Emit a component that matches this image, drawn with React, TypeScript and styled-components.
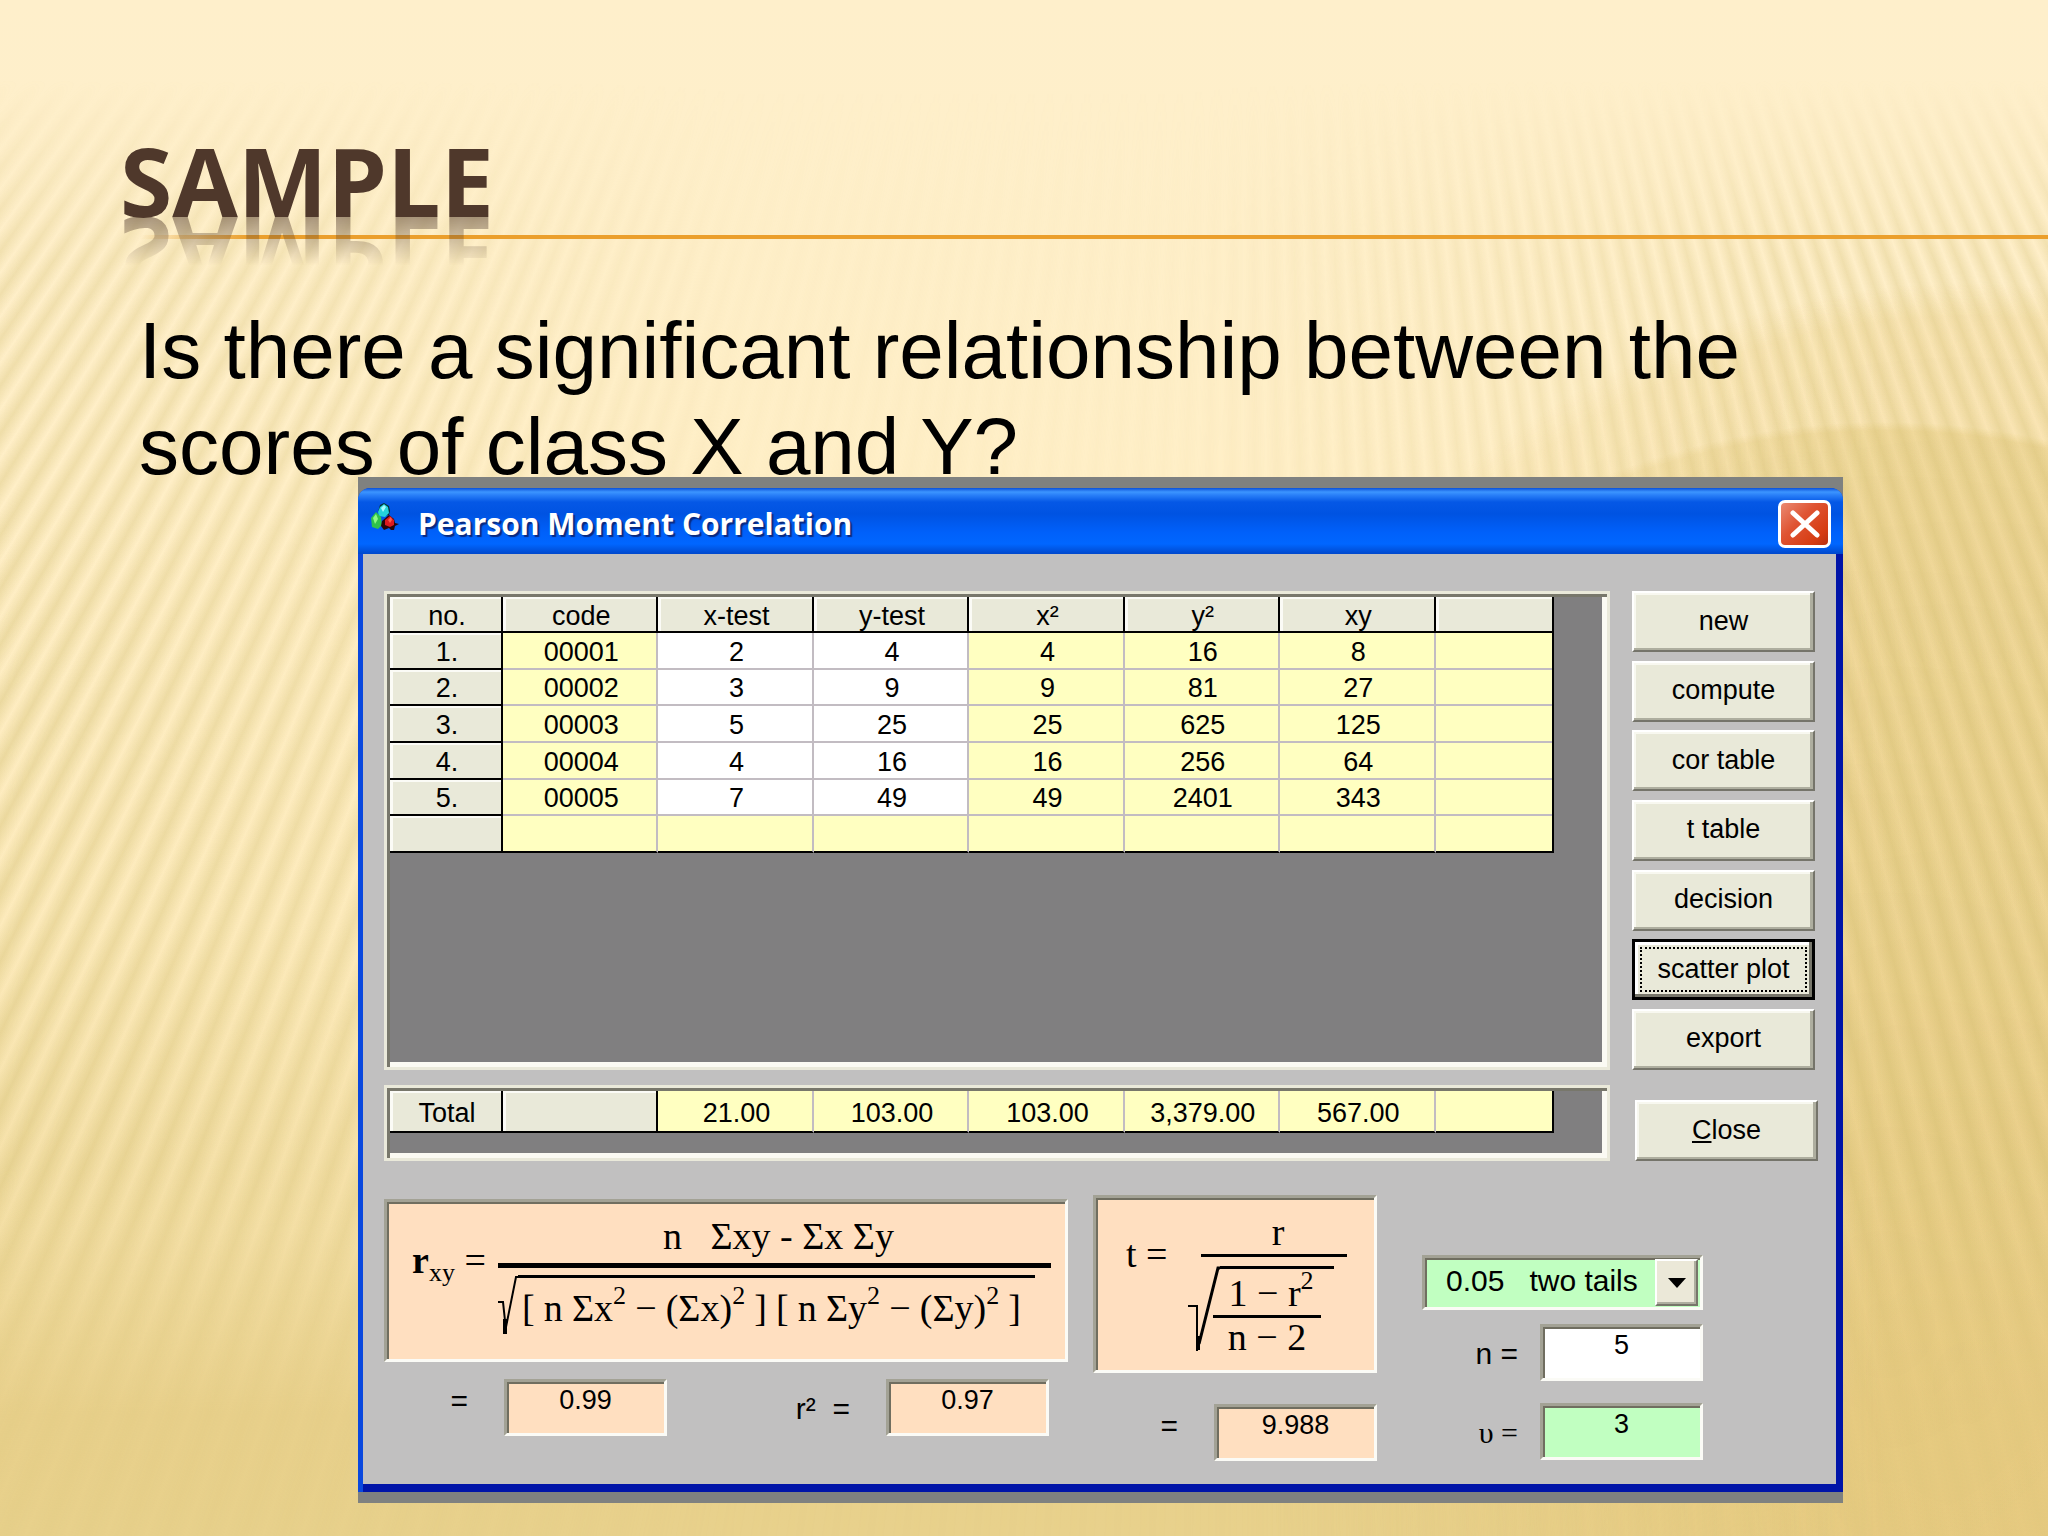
import React from 'react';
import styled, { createGlobalStyle, css } from 'styled-components';

const GlobalStyle = createGlobalStyle`
  *, *::before, *::after { box-sizing: border-box; }
  body { margin: 0; background: #fdeec6; }
`;

const sans = `"Liberation Sans", Arial, sans-serif`;
const serif = `"Liberation Serif", "Times New Roman", serif`;

/* ---------- slide ---------- */

const Slide = styled.main`
  position: relative;
  isolation: isolate;
  min-height: 100vh;
  padding: 132px 0 34px;
  overflow: hidden;
  color: #000;
  font-family: ${sans};
  background: linear-gradient(180deg, #feefcb 0%, #ffefc7 32%, #fdebbc 60%, #f4dfa5 80%, #e8d08b 92%, #e8d18c 100%);

  &::before,
  &::after {
    content: '';
    position: absolute;
    inset: 0;
    z-index: -1;
  }

  &::before {
    background:
      radial-gradient(ellipse 820px 900px at 92% 86%, rgba(224, 194, 116, 0.5) 0%, rgba(226, 198, 120, 0.42) 99%, transparent 100%),
      radial-gradient(ellipse 900px 1100px at 96% 90%, rgba(240, 210, 140, 0.4) 0%, rgba(240, 212, 144, 0.35) 97%, transparent 100%);
    mask-image: linear-gradient(90deg, transparent 62%, #000 92%);
  }

  &::after {
    background: repeating-conic-gradient(
      from 0deg at 61% -1500px,
      rgba(205, 184, 104, 0) 0deg,
      rgba(205, 184, 104, 0.38) 0.33deg,
      rgba(205, 184, 104, 0) 0.66deg
    );
    mask-image:
      linear-gradient(180deg, transparent 80px, rgba(0, 0, 0, 0.75) 260px, #000 700px, #000 76%, rgba(0, 0, 0, 0.2) 92%),
      linear-gradient(90deg, #000 0%, rgba(0, 0, 0, 0.75) 16%, rgba(0, 0, 0, 0.1) 36%, rgba(0, 0, 0, 0.1) 58%, #000 88%);
    mask-composite: intersect;
  }
`;

const Title = styled.h1`
  width: fit-content;
  margin: 0 0 0 120px;
  font: 700 95px/96px "Open Sans", "Noto Sans", sans-serif;
  color: #4f382b;
  text-transform: uppercase;
  -webkit-box-reflect: below -22px linear-gradient(180deg, transparent 38%, rgba(0, 0, 0, 0.5) 90%);
`;

const Rule = styled.hr`
  height: 4px;
  margin: 7px 0 0 140px;
  border: 0;
  background: linear-gradient(90deg, rgba(236, 158, 40, 0) 0, #eb9f2c 110px);
`;

const Question = styled.p`
  margin: 64px 139px 0;
  font-size: 80px;
  line-height: 96px;
`;

/* ---------- window ---------- */

const Backing = styled.section`
  position: relative;
  margin: -18px 205px 0 358px;
  padding: 11px 0;
  background: #7f8180;
`;

const Window = styled.div`
  border-radius: 12px 12px 0 0;
  background: #0a48de;
  overflow: hidden;
`;

const TitleBar = styled.header`
  display: flex;
  align-items: center;
  gap: 18px;
  height: 66px;
  padding: 5px 12px 0;
  background: linear-gradient(180deg, #0a50d8 0, #3c95ff 4px, #2a80f8 7px, #0558e6 14px, #0053e2 26px, #0060fa 44px, #0066ff 56px, #0048cc 66px);
`;

const AppMark = styled.svg`
  align-self: flex-start;
  margin-top: 10px;
`;

const WindowTitle = styled.h2`
  flex: 1;
  margin: 0;
  font: 700 30px/40px "Open Sans", "Noto Sans", sans-serif;
  color: #fff;
  text-shadow: 2px 2px 1px #0a2a80;
`;

const CloseBox = styled.button`
  display: grid;
  place-items: center;
  width: 53px;
  height: 48px;
  padding: 0;
  border: 3px solid #fff;
  border-radius: 7px;
  background: linear-gradient(135deg, #ea8a72 0%, #df5433 40%, #d63c12 80%, #b83010 100%);
`;

const Body = styled.div`
  margin: 0 7px 8px 5px;
  padding: 37px 18px 23px 21px;
  background: #c1c0c0;
  box-shadow: 4px 4px 0 4px #0014a8;
`;

const Upper = styled.div`
  display: grid;
  grid-template-columns: 1fr 186px;
  gap: 15px 22px;
`;

const Panel = styled.div<{ $height: number }>`
  min-height: ${(p) => p.$height}px;
  padding: 3px 5px 5px 3px;
  border: 3px solid #eae9da;
  background: #807f80;
  box-shadow: inset 3px 3px 0 #78776b, inset -5px -5px 0 #fbfaf3;
`;

/* ---------- tables ---------- */

const Grid = styled.table<{ $height: number }>`
  width: 96%;
  height: ${(p) => p.$height}px;
  table-layout: fixed;
  border-collapse: separate;
  border-spacing: 0;
  border-right: 2px solid #000;
  font-size: 27px;
  line-height: 30px;
  text-align: center;
`;

const NumberCol = styled.col`
  width: 113px;
`;

const SpareCol = styled.col`
  width: 116px;
`;

const Head = styled.th`
  height: 36px;
  padding: 3px 0 0 3px;
  border-right: 2px solid #000;
  border-bottom: 2px solid #000;
  background: #e9e9d9;
  box-shadow: inset 3px 2px 0 #fbfbf6;
  font-weight: 400;

  &:last-child { border-right: 0; }
`;

const Cell = styled.td<{ $plain?: boolean }>`
  height: 36px;
  padding: 3px 0 0 3px;
  border-right: 2px solid #c2bcc2;
  border-bottom: 2px solid #c2bcc2;
  background: ${(p) => (p.$plain ? '#fff' : '#ffffc1')};

  &:last-child { border-right: 0; }
  tr:last-child > & { border-bottom-color: #000; }
`;

/* ---------- buttons ---------- */

const Commands = styled.div`
  display: flex;
  flex-direction: column;
  justify-content: space-between;
`;

const CommandButton = styled.button<{ $focused?: boolean; $end?: boolean }>`
  display: grid;
  width: 183px;
  height: 61px;
  padding: 4px;
  border: 2px solid;
  border-color: #fff #75746a #75746a #fff;
  background: #e9e9d9;
  box-shadow: inset -3px -2px 0 #aeae9f, inset 2px 2px 0 #f8f8f0;
  font: 27px/30px ${sans};
  color: #000;

  ${(p) => p.$end && css`
    align-self: end;
    justify-self: end;
  `}

  ${(p) => p.$focused && css`
    border-width: 3px;
    padding: 3px;
    border-color: #000;
    box-shadow: inset -3px -3px 0 #77766a, inset 3px 3px 0 #fff;
  `}
`;

const Face = styled.span<{ $focused?: boolean }>`
  display: grid;
  place-items: center;
  margin: 2px;
  padding-bottom: 2px;
  border: 2px dotted ${(p) => (p.$focused ? '#000' : 'transparent')};
  white-space: nowrap;
`;

/* ---------- lower part ---------- */

const Lower = styled.div`
  display: flex;
  margin-top: 34px;
`;

const Group = styled.div<{ $width: number; $top: number; $gap: number; $after: number }>`
  display: flex;
  flex-direction: column;
  gap: ${(p) => p.$gap}px;
  width: ${(p) => p.$width}px;
  margin-right: ${(p) => p.$after}px;
  padding-top: ${(p) => p.$top}px;
`;

const Stack = styled.div`
  display: flex;
  flex-direction: column;
  gap: 22px;
`;

const sunken = css`
  border: 3px solid;
  border-color: #a3a295 #fbfbf6 #fbfbf6 #a3a295;
  box-shadow: inset 2px 2px 0 #706e60;
`;

const FormulaBox = styled.div<{ $height: number; $indent: number }>`
  ${sunken}
  display: flex;
  align-items: flex-start;
  min-height: ${(p) => p.$height}px;
  padding: 12px 14px 0 ${(p) => p.$indent}px;
  background: #ffdfc0;
  font: 38px/44px ${serif};
  white-space: pre;

  sup, sub { font-size: 26px; line-height: 0; }
  sup { vertical-align: 17px; }
  sub { vertical-align: -8px; font-weight: 400; }
`;

const Lhs = styled.span<{ $width: number; $top: number }>`
  flex: none;
  width: ${(p) => p.$width}px;
  padding-top: ${(p) => p.$top}px;
`;

const Fraction = styled.div<{ $width?: number }>`
  display: flex;
  flex-direction: column;
  flex: ${(p) => (p.$width ? 'none' : '1')};
  width: ${(p) => (p.$width ? `${p.$width}px` : 'auto')};
`;

const Numerator = styled.div<{ $bar: number; $space?: number }>`
  padding: 0 0 ${(p) => p.$space ?? 0}px 8px;
  border-bottom: ${(p) => p.$bar}px solid #000;
  text-align: center;
`;

const Root = styled.div<{ $top: number; $left?: number; $right: number }>`
  display: flex;
  margin: ${(p) => p.$top}px ${(p) => p.$right}px 0 ${(p) => p.$left ?? 0}px;
`;

const Radicand = styled.div<{ $pad: string }>`
  flex: 1;
  padding: ${(p) => p.$pad};
  border-top: 3px solid #000;
`;

const Product = styled.div`
  display: flex;
  justify-content: space-between;
`;

const InnerFraction = styled.div`
  width: 108px;
  margin-left: -7px;
  text-align: center;
`;

const Denominator = styled.div`
  line-height: 38px;
`;

const Line = styled.div<{ $gap: number; $right?: number }>`
  display: flex;
  align-items: flex-start;
  justify-content: flex-end;
  gap: ${(p) => p.$gap}px;
  margin-right: ${(p) => p.$right ?? 0}px;
`;

const Label = styled.label<{ $wide?: boolean; $serif?: boolean; $low?: boolean }>`
  display: block;
  width: ${(p) => (p.$wide ? '147px' : 'auto')};
  padding-top: ${(p) => (p.$low ? 12 : 4)}px;
  font: 30px/36px ${(p) => (p.$serif ? serif : sans)};
  text-align: right;
  white-space: pre;
`;

const Field = styled.input<{ $tone: string }>`
  ${sunken}
  width: 163px;
  height: 57px;
  padding: 0 0 14px;
  border-radius: 0;
  background: ${(p) => p.$tone};
  font: 27px/30px ${sans};
  text-align: center;
  color: #000;
`;

const SelectWrap = styled.div`
  position: relative;
`;

const Select = styled.select`
  ${sunken}
  appearance: none;
  width: 100%;
  height: 55px;
  padding: 0 44px 4px 21px;
  border-radius: 0;
  background: #c1ffc1;
  font: 30px/34px ${sans};
  color: #000;
`;

const Arrow = styled.span`
  position: absolute;
  top: 4px;
  right: 5px;
  display: grid;
  place-items: center;
  width: 43px;
  height: 47px;
  border: 2px solid;
  border-color: #fff #77766a #77766a #fff;
  background: #ebe8d8;
  box-shadow: inset -2px -2px 0 #aeae9f;
  pointer-events: none;
`;

/* ---------- data ---------- */

const headings = ['no.', 'code', 'x-test', 'y-test', 'x²', 'y²', 'xy', ''];
const rows = [
  ['1.', '00001', '2', '4', '4', '16', '8', ''],
  ['2.', '00002', '3', '9', '9', '81', '27', ''],
  ['3.', '00003', '5', '25', '25', '625', '125', ''],
  ['4.', '00004', '4', '16', '16', '256', '64', ''],
  ['5.', '00005', '7', '49', '49', '2401', '343', ''],
  ['', '', '', '', '', '', '', ''],
];
const totals = ['21.00', '103.00', '103.00', '3,379.00', '567.00', ''];
const commands = ['new', 'compute', 'cor table', 't table', 'decision', 'scatter plot', 'export'];

const Columns = () => (
  <colgroup>
    <NumberCol />
    <col span={6} />
    <SpareCol />
  </colgroup>
);

const AppIcon = () => (
  <AppMark width="30" height="28" viewBox="0 0 30 28" aria-hidden="true">
    <path d="M10 2l4-2 5 3 1 5-1 4-8 1-3-4z" fill="#06302f" />
    <path d="M10 4l4-3 4 3 1 6-4 4-6-1-1-4z" fill="#22d3dc" />
    <path d="M11 5l3-3 2 2-3 5z" fill="#a6fbff" />
    <path d="M1 15l5-6 5 5 1 8-4 4-6-2z" fill="#2fc24a" />
    <path d="M3 15l3-4 2 5-3 5z" fill="#8dfb83" />
    <path d="M12 18l7-6 5 4 1 4 4 1-4 2-1 4h-3l-2-2-5 2-3-4z" fill="#2a0508" />
    <path d="M15 17l5-4 4 4v5l-4 2-5-2z" fill="#dd1a1f" />
    <path d="M18 17l3-3 1 3-2 3z" fill="#ff5c4a" />
  </AppMark>
);

export default function App() {
  return (
    <>
      <GlobalStyle />
      <Slide>
        <Title>Sample</Title>
        <Rule />
        <Question>Is there a significant relationship between the scores of class X and Y?</Question>

        <Backing>
          <Window>
            <TitleBar>
              <AppIcon />
              <WindowTitle>Pearson Moment Correlation</WindowTitle>
              <CloseBox type="button" aria-label="Close window">
                <svg width="30" height="28" viewBox="0 0 30 28" aria-hidden="true">
                  <path d="M3 3l24 22M27 3L3 25" stroke="#fff" strokeWidth="5" strokeLinecap="round" />
                </svg>
              </CloseBox>
            </TitleBar>

            <Body>
              <Upper>
                <Panel $height={479}>
                  <Grid $height={256} aria-label="Scores">
                    <Columns />
                    <thead>
                      <tr>
                        {headings.map((text, i) => (
                          <Head key={i} scope="col">{text}</Head>
                        ))}
                      </tr>
                    </thead>
                    <tbody>
                      {rows.map((row, r) => (
                        <tr key={r}>
                          <Head scope="row">{row[0]}</Head>
                          {row.slice(1).map((text, c) => (
                            <Cell key={c} $plain={r < 5 && (c === 1 || c === 2)}>{text}</Cell>
                          ))}
                        </tr>
                      ))}
                    </tbody>
                  </Grid>
                </Panel>

                <Commands>
                  {commands.map((name) => (
                    <CommandButton key={name} type="button" $focused={name === 'scatter plot'}>
                      <Face $focused={name === 'scatter plot'}>{name}</Face>
                    </CommandButton>
                  ))}
                </Commands>

                <Panel $height={76}>
                  <Grid $height={42} aria-label="Totals">
                    <Columns />
                    <tbody>
                      <tr>
                        <Head scope="row">Total</Head>
                        <Head as="td" />
                        {totals.map((text, i) => (
                          <Cell key={i}>{text}</Cell>
                        ))}
                      </tr>
                    </tbody>
                  </Grid>
                </Panel>

                <CommandButton type="button" $end>
                  <Face><span><u>C</u>lose</span></Face>
                </CommandButton>
              </Upper>

              <Lower>
                <Group $width={684} $top={4} $gap={17} $after={25}>
                  <FormulaBox $height={163} $indent={25}>
                    <Lhs $width={86} $top={24}><b>r<sub>xy</sub></b> =</Lhs>
                    <Fraction>
                      <Numerator $bar={5} $space={5}>n   Σxy - Σx Σy</Numerator>
                      <Root $top={7} $right={16}>
                        <svg width="20" height="60" viewBox="0 0 20 60" fill="none" stroke="#000" aria-hidden="true">
                          <path d="M0 27h5l3 28" strokeWidth="2" />
                          <path d="M7 44v15" strokeWidth="4" />
                          <path d="M8 52L18 2h2" strokeWidth="2" />
                        </svg>
                        <Radicand $pad="8px 14px 0 4px">
                          <Product>
                            <span>[</span><span>n</span><span>Σx<sup>2</sup></span><span>−</span><span>(Σx)<sup>2</sup></span><span>]</span>
                            <span>[</span><span>n</span><span>Σy<sup>2</sup></span><span>−</span><span>(Σy)<sup>2</sup></span><span>]</span>
                          </Product>
                        </Radicand>
                      </Root>
                    </Fraction>
                  </FormulaBox>
                  <Line $gap={36} $right={19}>
                    <Label htmlFor="rxy">=</Label>
                    <Field id="rxy" $tone="#ffdfc0" readOnly value="0.99" />
                    <Label htmlFor="rsq" $wide $low>r²  =</Label>
                    <Field id="rsq" $tone="#ffdfc0" readOnly value="0.97" />
                  </Line>
                </Group>

                <Group $width={284} $top={0} $gap={31} $after={45}>
                  <FormulaBox $height={178} $indent={30}>
                    <Lhs $width={75} $top={22}>t =</Lhs>
                    <Fraction $width={146}>
                      <Numerator $bar={3}>r</Numerator>
                      <Root $top={9} $left={-13} $right={13}>
                        <svg width="32" height="86" viewBox="0 0 32 86" fill="none" stroke="#000" aria-hidden="true">
                          <path d="M0 40h9v45" strokeWidth="2" />
                          <path d="M10 70v14" strokeWidth="4" />
                          <path d="M11 78L30 2h2" strokeWidth="3" />
                        </svg>
                        <Radicand $pad="2px 0 0">
                          <InnerFraction>
                            <Numerator $bar={3}>1 − r<sup>2</sup></Numerator>
                            <Denominator>n − 2</Denominator>
                          </InnerFraction>
                        </Radicand>
                      </Root>
                    </Fraction>
                  </FormulaBox>
                  <Line $gap={36}>
                    <Label htmlFor="tvalue">=</Label>
                    <Field id="tvalue" $tone="#ffdfc0" readOnly value="9.988" />
                  </Line>
                </Group>

                <Group $width={281} $top={60} $gap={14} $after={0}>
                  <SelectWrap>
                    <Select aria-label="Significance level" defaultValue="two">
                      <option value="two">{'0.05\u00a0\u00a0\u00a0two tails'}</option>
                      <option value="one">{'0.05\u00a0\u00a0\u00a0one tail'}</option>
                    </Select>
                    <Arrow>
                      <svg width="18" height="10" viewBox="0 0 18 10" aria-hidden="true">
                        <path d="M0 0h18L9 10z" />
                      </svg>
                    </Arrow>
                  </SelectWrap>
                  <Stack>
                    <Line $gap={22}>
                      <Label htmlFor="count" $low>n =</Label>
                      <Field id="count" $tone="#fff" readOnly value="5" />
                    </Line>
                    <Line $gap={22}>
                      <Label htmlFor="freedom" $serif $low>υ =</Label>
                      <Field id="freedom" $tone="#c1ffc1" readOnly value="3" />
                    </Line>
                  </Stack>
                </Group>
              </Lower>
            </Body>
          </Window>
        </Backing>
      </Slide>
    </>
  );
}
